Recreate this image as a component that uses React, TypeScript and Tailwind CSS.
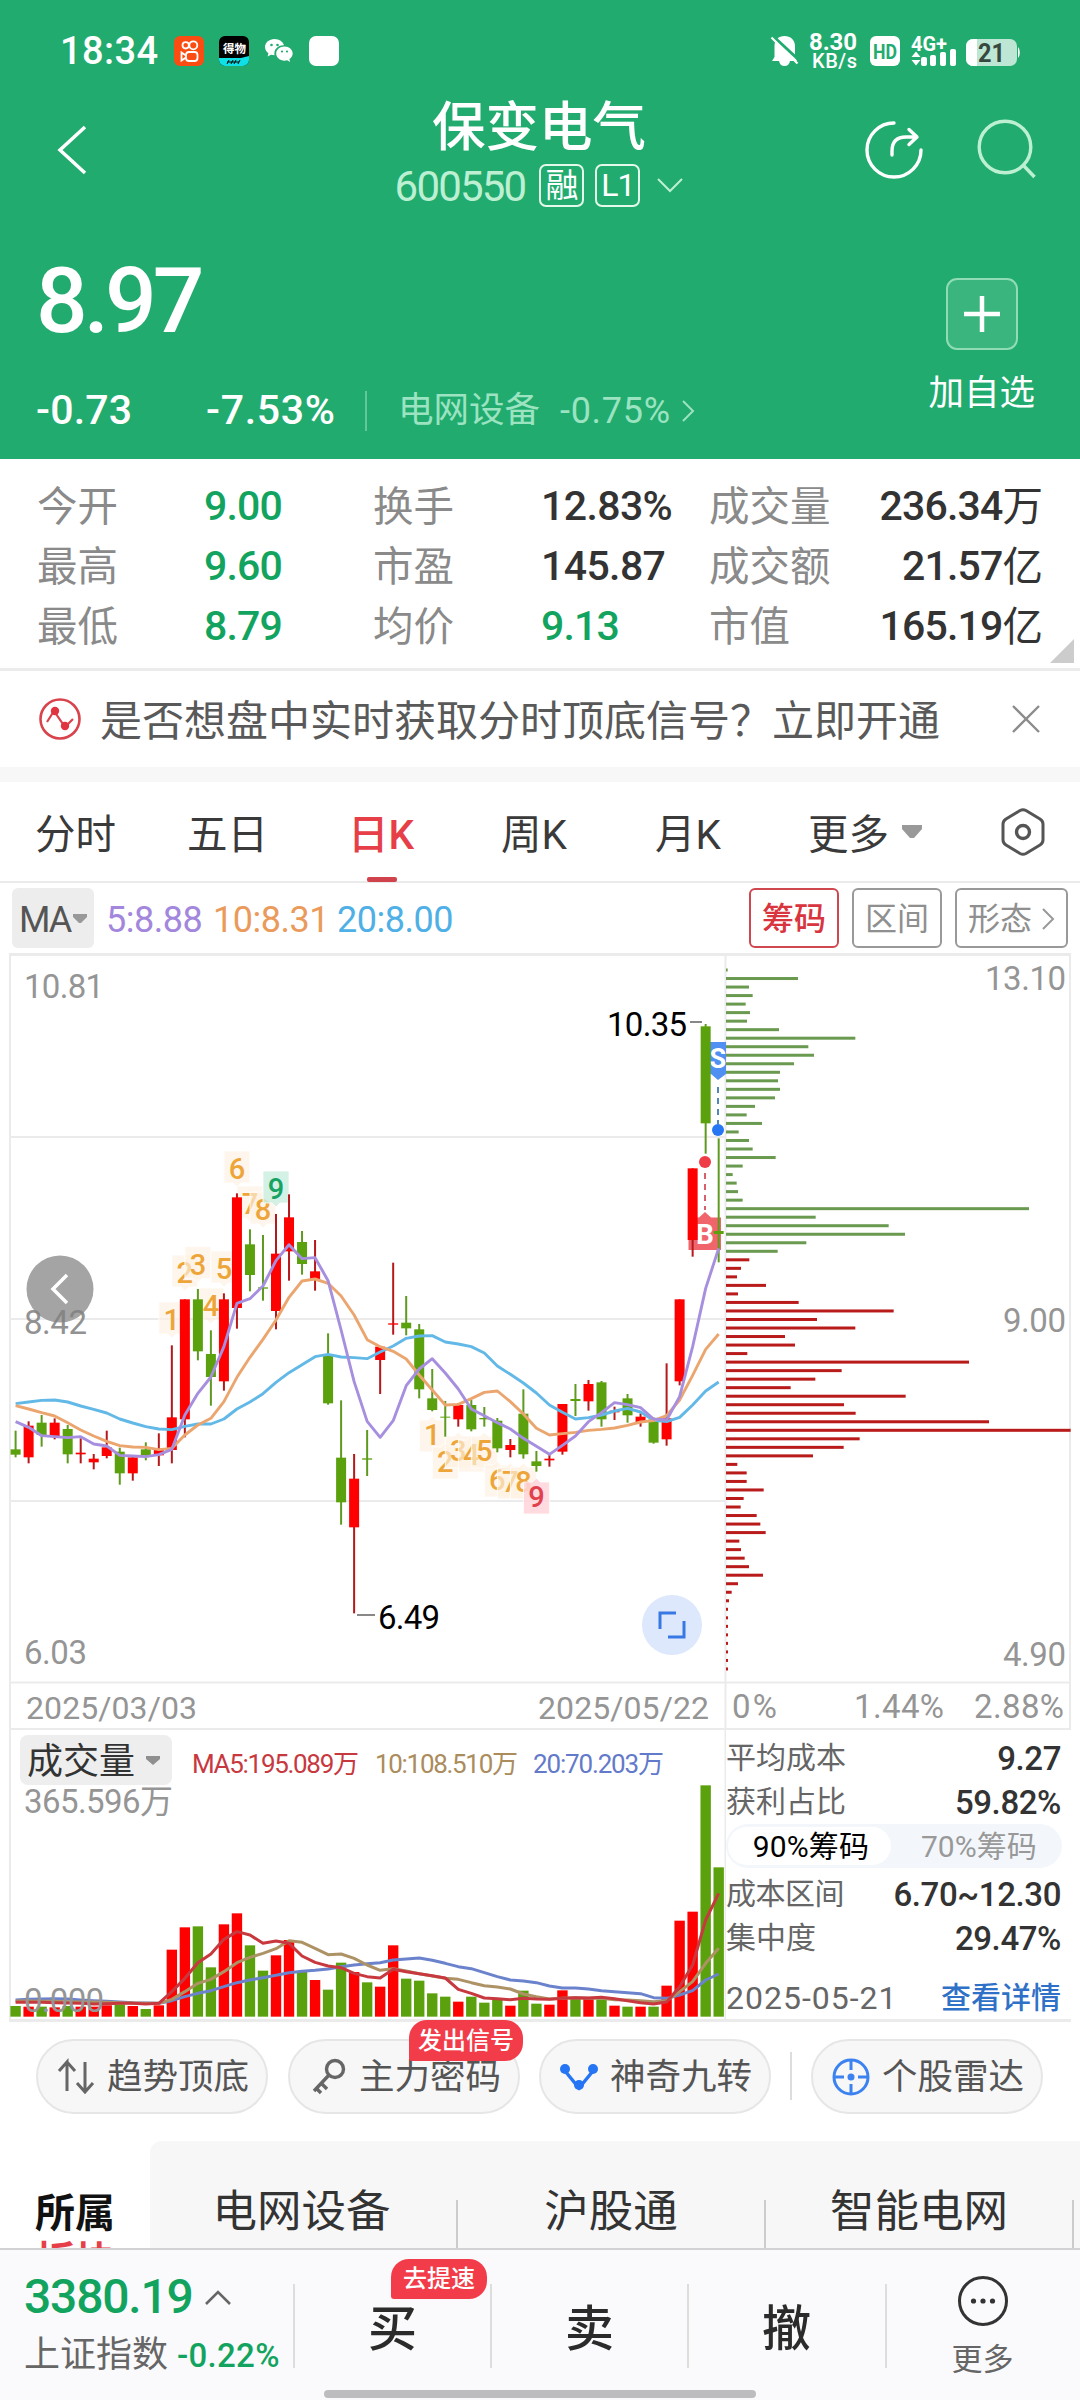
import type { ReactNode } from 'react';

type Candle = ['r' | 'g', number, number, number, number];

// kind, high, body top, body bottom, low (a third of a pixel each, from y = 1220)
const candles: Candle[] = [
    ['g', 632, 688, 704, 712], ['r', 604, 617, 712, 730], ['g', 585, 608, 645, 680], ['r', 595, 608, 650, 658],
    ['g', 615, 627, 703, 730], ['r', 655, 698, 703, 730], ['r', 702, 716, 727, 748], ['r', 632, 682, 708, 715],
    ['g', 683, 695, 760, 794], ['r', 710, 712, 760, 782], ['g', 667, 688, 706, 721], ['r', 640, 690, 706, 738],
    ['r', 376, 592, 690, 730], ['r', 238, 238, 598, 652], ['g', 207, 238, 394, 421], ['g', 331, 402, 471, 557],
    ['r', 220, 238, 484, 512], ['r', -80, -68, 264, 326], ['g', 28, 73, 165, 214], ['g', 45, 202, 206, 242],
    ['r', -18, 101, 273, 328], ['r', -77, -8, 94, 182], ['g', 33, 66, 132, 164], ['r', 60, 154, 178, 212],
    ['g', 340, 404, 550, 554], ['g', 541, 713, 847, 914], ['r', 702, 776, 922, 1180], ['g', 630, 715, 719, 768],
    ['r', 380, 380, 420, 522], ['r', 128, 310, 314, 344], ['g', 228, 308, 325, 346], ['g', 312, 328, 508, 535],
    ['g', 447, 535, 570, 574], ['g', 543, 590, 593, 650], ['r', 550, 555, 598, 620], ['g', 540, 555, 628, 634],
    ['g', 561, 594, 598, 620], ['g', 594, 602, 685, 697], ['r', 657, 675, 690, 712], ['g', 508, 581, 703, 716],
    ['g', 693, 724, 738, 755], ['r', 702, 716, 721, 740], ['r', 552, 552, 695, 704], ['g', 492, 537, 543, 588],
    ['r', 480, 492, 544, 572], ['g', 483, 487, 598, 620], ['r', 560, 572, 577, 600], ['g', 522, 535, 586, 608],
    ['r', 580, 590, 606, 620], ['g', 592, 598, 668, 671], ['r', 430, 595, 658, 677], ['r', 238, 238, 484, 496],
    ['r', -155, -155, 60, 110], ['g', -588, -581, -290, -199], ['g', -245, 33, 42, 127]
];

const ma5 = [605, 622, 647, 650, 653, 650, 672, 678, 706, 708, 710, 704, 688, 585, 520, 471, 380, 250, 236, 198, 122, 74, 116, 113, 182, 330, 485, 604, 652, 602, 497, 447, 416, 459, 507, 567, 587, 608, 627, 655, 679, 703, 676, 648, 605, 578, 548, 554, 563, 597, 600, 530, 380, 205, 85];
const ma10 = [557, 567, 578, 588, 608, 630, 648, 664, 677, 681, 682, 689, 685, 645, 615, 595, 545, 472, 412, 358, 300, 232, 183, 177, 190, 228, 285, 359, 380, 394, 417, 465, 510, 555, 553, 536, 517, 513, 545, 582, 625, 645, 641, 637, 631, 628, 624, 616, 606, 602, 587, 540, 466, 388, 342];
const ma20 = [551, 546, 541, 540, 546, 558, 568, 579, 597, 609, 620, 627, 629, 619, 612, 612, 597, 567, 546, 521, 487, 458, 434, 410, 403, 411, 413, 416, 396, 378, 355, 348, 347, 366, 372, 380, 399, 438, 463, 489, 519, 555, 577, 597, 593, 585, 573, 565, 576, 601, 605, 592, 555, 513, 486];

// chip distribution, from the highest price down
const chips = [5, 216, 69, 80, 59, 72, 63, 159, 388, 247, 264, 204, 162, 156, 162, 147, 87, 62, 108, 38, 69, 80, 149, 50, 20, 32, 36, 50, 909, 269, 488, 537, 241, 155, 70, 45, 33, 120, 36, 218, 503, 273, 388, 177, 207, 64, 729, 347, 268, 194, 539, 354, 389, 789, 1034, 401, 353, 261, 34, 62, 62, 113, 53, 44, 92, 103, 119, 40, 45, 56, 69, 111, 36, 17, 9, 6, 6, 6, 6, 6, 6, 6, 6];

const volumes = [1068, 1070, 1070, 1072, 1068, 1070, 1070, 1066, 1063, 1068, 1077, 1066, 899, 832, 829, 952, 823, 790, 886, 962, 916, 870, 965, 990, 1019, 938, 966, 997, 1010, 886, 986, 992, 1030, 1040, 1055, 1040, 1058, 1050, 1067, 1022, 1061, 1064, 1021, 1045, 1047, 1048, 1067, 1070, 1070, 1070, 1007, 812, 785, 406, 652];
const vol5 = [1057, 1057, 1057, 1058, 1059, 1060, 1062, 1061, 1060, 1060, 1062, 1060, 1025, 985, 938, 912, 868, 845, 855, 880, 873, 880, 918, 937, 948, 953, 970, 980, 984, 958, 965, 971, 977, 984, 1018, 1030, 1044, 1046, 1049, 1045, 1047, 1048, 1045, 1043, 1044, 1042, 1046, 1052, 1058, 1062, 1056, 1010, 945, 810, 730];
const vol10 = [1053, 1053, 1054, 1054, 1055, 1056, 1056, 1057, 1058, 1059, 1060, 1060, 1048, 1025, 1000, 988, 965, 938, 922, 910, 896, 872, 877, 895, 914, 912, 925, 945, 961, 956, 963, 971, 978, 985, 988, 998, 1007, 1011, 1017, 1032, 1040, 1047, 1045, 1043, 1045, 1045, 1049, 1050, 1052, 1055, 1052, 1025, 995, 940, 895];
const vol20 = [1050, 1048, 1047, 1046, 1047, 1050, 1052, 1054, 1056, 1058, 1059, 1060, 1052, 1040, 1030, 1022, 1010, 998, 990, 983, 976, 968, 964, 961, 957, 950, 945, 941, 938, 930, 927, 924, 931, 940, 950, 956, 968, 980, 990, 993, 998, 1008, 1014, 1014, 1017, 1022, 1025, 1028, 1031, 1043, 1045, 1035, 1022, 990, 972];

// candle index, text centre y
const topMarks: [number, number][] = [[12, 1320], [13, 1273], [14, 1264.5], [15, 1306], [16, 1269], [17, 1169], [18, 1204], [19, 1210], [20, 1189]];
const bottomMarks: [number, number][] = [[32, 1435], [33, 1462], [34, 1451], [35, 1455], [36, 1451], [37, 1480], [38, 1482], [39, 1482], [40, 1497]];

const RED = '#fe0000';
const GREEN = '#5ba10e';

const cx = (i: number) => 15.6 + 13.02 * i;
const linePoints = (values: number[], base: number) => values.map((v, i) => `${cx(i)},${base + v / 3}`).join(' ');

type LabelProps = { x: number; y: number; w: number; size?: number; fill?: string; children: string };

const Label = ({ x, y, w, size = 33, fill = '#959595', children }: LabelProps) => (
    <text x={x} y={y} textLength={w} fontSize={size} fill={fill}>
        {children}
    </text>
);

const Mark = ({ x, y, n, up }: { x: number; y: number; n: number; up?: boolean }) => {
    const nine = n === 9;
    const fill = nine ? (up ? '#ffd5da' : '#cdeee0') : '#fef1e2';
    const color = nine ? (up ? '#e0414c' : '#17a364') : '#eda53a';
    const top = up ? y - 15 : y - 18;
    const d = up
        ? `M${x - 13} ${top}h9l4 -4l4 4h9v32h-26z`
        : `M${x - 13} ${top}h26v32h-9l-4 4l-4 -4h-9z`;

    return (
        <g>
            <path d={d} fill={fill} fillOpacity={nine ? 0.85 : 0.65} stroke="#fff" strokeOpacity="0.8" />
            <text x={x} y={y + 10} fontSize="29" fontWeight="500" fill={color} textAnchor="middle">{n}</text>
        </g>
    );
};

const PriceChart = () => (
    <svg className="block" width="1080" height="777" viewBox="0 953 1080 777" fontFamily="Roboto, 'Noto Sans CJK SC', sans-serif">
        <g stroke="#ebebeb" strokeWidth="2" fill="none">
            <path d="M9 954.5H1071" strokeWidth="3" />
            <path d="M10 954V1730M1070 954V1730M725.5 954V1730" />
            <path d="M10 1137H725M10 1319H725M10 1501H725M10 1682.500H1070M10 1729H1070" />
        </g>

        <Label x={24} y={998} w={80}>10.81</Label>
        <Label x={24} y={1664} w={63}>6.03</Label>
        <Label x={985} y={990} w={81}>13.10</Label>
        <Label x={1003} y={1332} w={63}>9.00</Label>
        <Label x={1003} y={1666} w={63}>4.90</Label>
        <Label x={26} y={1719} w={171} size={32}>2025/03/03</Label>
        <Label x={538} y={1719} w={171} size={32}>2025/05/22</Label>
        <Label x={732} y={1718} w={45}>0%</Label>
        <Label x={854} y={1718} w={90}>1.44%</Label>
        <Label x={974} y={1718} w={90}>2.88%</Label>

        {chips.map((w, i) => (
            <rect key={i} x="726" y={968.500 + i * 8.524} width={w / 3} height="3" fill={i < 34 ? '#6a9a50' : '#b91a1a'} />
        ))}

        {topMarks.map(([i, y], n) => <Mark key={i} x={cx(i)} y={y} n={n + 1} />)}
        {bottomMarks.map(([i, y], n) => <Mark key={i} x={cx(i)} y={y} n={n + 1} up />)}

        <path d="M709 1042H726V1074L718 1080L711 1074H709Z" fill="#5090f2" />
        <text x="709.500" y="1068" fontSize="27" fontWeight="700" fill="#fff">S</text>
        <path d="M718 1087V1124" stroke="#5088b8" strokeWidth="2" strokeDasharray="6 5" />
        <path d="M688.500 1217.500H699L705 1212L711 1217.500H721V1250H688.500Z" fill="#f0646c" />
        <text x="696" y="1244" fontSize="28" fontWeight="700" fill="#fff">B</text>
        <path d="M705 1173V1210" stroke="#d8606a" strokeWidth="2" strokeDasharray="6 5" />

        {candles.map(([kind, high, top, bottom, low], i) => (
            <g key={i} fill={kind === 'r' ? RED : GREEN}>
                <rect x={cx(i) - 1} y={1220 + high / 3} width="2" height={(low - high) / 3} fill={kind === 'r' ? '#b5191b' : '#5f9a20'} />
                <rect x={cx(i) - 5} y={1220 + top / 3} width="10" height={(bottom - top) / 3} />
            </g>
        ))}

        <g fill="none" strokeWidth="2.900" strokeLinejoin="round">
            <polyline points={linePoints(ma20, 1220)} stroke="#62b8e6" />
            <polyline points={linePoints(ma10, 1220)} stroke="#eba56f" />
            <polyline points={linePoints(ma5, 1220)} stroke="#a78fdf" />
        </g>

        <circle cx="718" cy="1130" r="6" fill="#2577f4" />
        <circle cx="705" cy="1162" r="6" fill="#ee3d46" />

        <Label x={607} y={1036} w={80} fill="#000">10.35</Label>
        <path d="M690 1022H702" stroke="#888" strokeWidth="2" />
        <Label x={378} y={1629} w={62} fill="#000">6.49</Label>
        <path d="M357 1615H375" stroke="#888" strokeWidth="2" />

        <circle cx="60" cy="1289" r="33.500" fill="#a4a4a4" />
        <path d="M67 1275L53 1289L67 1303" fill="none" stroke="#fff" strokeWidth="3.500" />
        <g opacity="0.85"><Label x={24} y={1334} w={63} fill="#808080">8.42</Label></g>

        <circle cx="672" cy="1625" r="30" fill="#dde8fd" />
        <path d="M660 1629V1613H676M684 1621V1637H668" fill="none" stroke="#3878e4" strokeWidth="3" />
    </svg>
);

const VolumeChart = () => (
    <svg className="block" width="726" height="292" viewBox="0 1730 726 292" fontFamily="Roboto, 'Noto Sans CJK SC', sans-serif">
        <path d="M10 1730V2020M725.500 1730V2020" stroke="#ebebeb" strokeWidth="2" />
        <rect x="20" y="1735" width="152" height="50" rx="8" fill="#eee" />
        <text x="27" y="1774" fontSize="36" fill="#333" fontFamily="'Noto Sans CJK SC', sans-serif">成交量</text>
        <path d="M146 1756H160V1759L153 1765L146 1759Z" fill="#8f8f8f" />
        <Label x={192} y={1773} w={167} size={26} fill="#c8393f">MA5:195.089万</Label>
        <Label x={375} y={1773} w={143} size={26} fill="#ab8c5c">10:108.510万</Label>
        <Label x={533} y={1773} w={131} size={26} fill="#637aca">20:70.203万</Label>
        <Label x={24} y={1813} w={149}>365.596万</Label>
        {volumes.map((v, i) => (
            <rect key={i} x={cx(i) - 5.200} y={1650 + v / 3} width="10.400" height={(1100 - v) / 3} fill={candles[i][0] === 'r' ? RED : GREEN} />
        ))}
        <g fill="none" strokeWidth="3" strokeLinejoin="round">
            <polyline points={linePoints(vol20, 1650)} stroke="#6b83cc" />
            <polyline points={linePoints(vol10, 1650)} stroke="#ad9265" />
            <polyline points={linePoints(vol5, 1650)} stroke="#c8393f" />
        </g>
        <Label x={24} y={2012} w={80}>0.000</Label>
    </svg>
);

const StatusBar = () => (
    <div className="flex h-[102px] items-center pl-[60px] pr-[58px] font-medium text-white">
        <span className="w-[114px] text-[38px] tracking-[0.4px]">18:34</span>
        <div className="flex gap-[15px]">
            <svg width="30" height="30" viewBox="0 0 30 30">
                <rect width="30" height="30" rx="6" fill="#fb4d11" />
                <g fill="none" stroke="#fff" strokeWidth="1.800">
                    <circle cx="11.700" cy="9.300" r="3.200" />
                    <circle cx="19.300" cy="9.300" r="4" />
                    <rect x="12" y="16" width="11.500" height="9" rx="3" />
                    <path d="M12 19.500L7.500 16.500V24.500L12 21.500" />
                </g>
            </svg>
            <svg width="30" height="30" viewBox="0 0 30 30">
                <rect width="30" height="30" rx="6" fill="#000" />
                <path d="M0 22H22L30 20V24a6 6 0 0 1-6 6H6a6 6 0 0 1-6-6z" fill="#0ee0e6" />
                <text x="4" y="17" fontSize="11.500" fontWeight="700" fill="#fff" fontFamily="Noto Sans CJK SC">得物</text>
                <path d="M8 28l2-4M12 28l2-4M15 28l2-4M19 28l2-4M8 26h12" stroke="#000" strokeWidth="1" />
            </svg>
            <svg width="30" height="30" viewBox="0 0 30 30" fill="#fff">
                <path d="M10.500 3C5.200 3 1 6.600 1 11.100c0 2.400 1.300 4.700 3.400 6.100L3.600 20.400l3.400-1.700c1.100.3 2.200.5 3.500.5-1.200-6 4-10.500 9.500-10C19 5.800 15.200 3 10.500 3z" />
                <path d="M20.500 10.500c-4.700 0-8.300 3.200-8.300 7.100s3.600 7.100 8.300 7.100c.9 0 1.900-.1 2.700-.4l2.900 1.700-.7-2.900c2-1.300 3.300-3.300 3.300-5.500 0-3.900-3.500-7.100-8.200-7.100z" />
                <g fill="#22ab6f"><circle cx="7.500" cy="9" r="1.300" /><circle cx="13.500" cy="9" r="1.300" /><circle cx="18" cy="15.500" r="1.100" /><circle cx="23" cy="15.500" r="1.100" /></g>
            </svg>
            <span className="size-[30px] rounded-[7px] bg-white" />
        </div>
        <svg className="ml-auto" width="252" height="50" viewBox="770 26 252 50" fill="#fff" fontFamily="Roboto, sans-serif">
            <path d="M784.500 36c6 0 10.500 4 10.500 10v11l2 4H772l2.500-4V46c0-6 4-10 10-10zM779 61h11c-.5 3-2.500 5-5.500 5s-5-2-5.500-5z" />
            <path d="M774 37L800 61" stroke="#22ab6f" strokeWidth="3" />
            <path d="M771.500 37.500L797.500 63.500" stroke="#fff" strokeWidth="2.200" />
            <text x="809" y="50" fontSize="24" fontWeight="700" textLength="48">8.30</text>
            <text x="812" y="68" fontSize="20" fontWeight="500" textLength="45">KB/s</text>
            <rect x="870" y="36" width="30" height="30" rx="6" />
            <text x="873" y="58.500" fontSize="20" fontWeight="700" fill="#22ab6f" textLength="24" lengthAdjust="spacingAndGlyphs">HD</text>
            <text x="911" y="51" fontSize="21" fontWeight="700" textLength="36" lengthAdjust="spacingAndGlyphs">4G+</text>
            <path d="M911.500 57l4.500-5.500 4.500 5.500zM911.500 60l4.500 5.500 4.500-5.500z" />
            <rect x="921" y="57" width="6" height="9" rx="2" />
            <rect x="930" y="55" width="6" height="11" rx="2" />
            <rect x="940" y="52" width="6" height="14" rx="2" />
            <rect x="950" y="49" width="6" height="17" rx="2" />
            <rect x="966" y="39" width="51" height="27" rx="7" fillOpacity="0.7" />
            <path d="M977 39h-4a7 7 0 0 0-7 7v13a7 7 0 0 0 7 7h4zM1018 47a3 6 0 0 1 0 11z" />
            <text x="978" y="62" fontSize="26" fontWeight="700" fill="#37483f" textLength="27" lengthAdjust="spacingAndGlyphs">21</text>
        </svg>
    </div>
);

const Header = () => (
    <header className="h-[459px] bg-[#22ab6f] text-white">
        <StatusBar />
        <div className="flex h-[115px] items-start">
            <svg className="ml-[54px] mt-[22px]" width="36" height="52" viewBox="0 0 36 52">
                <path d="M31 3L6 26L31 49" fill="none" stroke="#fff" strokeWidth="3.500" />
            </svg>
            <div className="ml-[298px] flex w-[302px] flex-col items-center">
                <h1 className="-mt-px whitespace-nowrap text-[53.5px] font-medium leading-[54px]">保变电气</h1>
                <div className="mt-[5px] flex h-[50px] items-center">
                    <span className="mt-[3px] text-[42px] leading-[46px] tracking-[-1.8px] text-[#bdf0d3]">600550</span>
                    <span className="ml-[14px] flex h-[43px] w-[45px] items-center justify-center rounded-[7px] border-2 border-[#e3f9ec] text-[33px] leading-none">融</span>
                    <span className="ml-[11px] flex h-[43px] w-[45px] items-center justify-center rounded-[7px] border-2 border-[#e3f9ec] text-[32px] leading-none tracking-[-1px]">L1</span>
                    <svg className="ml-[17px]" width="26" height="16" viewBox="0 0 26 16">
                        <path d="M1 2L13 14L25 2" fill="none" stroke="#bdf0d3" strokeWidth="2" />
                    </svg>
                </div>
            </div>
            <svg className="ml-auto mr-[41px] mt-[17px]" width="176" height="62" viewBox="863 119 176 62" fill="none" strokeWidth="3.400">
                <path d="M894 123A27 27 0 1 0 921 150" stroke="#fff" strokeLinecap="round" />
                <path d="M892 155V151Q892 137 906 137H915M909 129.500L917 137L909 144.500" stroke="#fff" strokeLinecap="round" strokeLinejoin="round" />
                <circle cx="1005" cy="147" r="25.800" stroke="#bdf0d3" />
                <path d="M1024 166L1034.500 177" stroke="#bdf0d3" />
            </svg>
        </div>
        <div className="flex justify-between">
            <div className="pl-[36px] font-medium">
                <div className="mt-[30px] text-[91px] leading-[108px] tracking-[-4px]">8.97</div>
                <div className="mt-[29px] flex h-[54px] items-center text-[41px]">
                    <span className="w-[170px] tracking-[0.2px]">-0.73</span>
                    <span className="w-[159px] tracking-[0.7px]">-7.53%</span>
                    <span className="h-[40px] w-[2px] bg-[#64c79c]" />
                    <span className="ml-[31px] text-[35.5px] font-normal text-[#9be3c1]">电网设备</span>
                    <span className="ml-[20px] text-[36px] font-normal tracking-[0.7px] text-[#9be3c1]">-0.75%</span>
                    <svg className="ml-[10px]" width="14" height="24" viewBox="0 0 14 24">
                        <path d="M2 2L12 12L2 22" fill="none" stroke="#9be3c1" strokeWidth="2" />
                    </svg>
                </div>
            </div>
            <div className="mr-[45px] flex flex-col items-center pt-[61px]">
                <svg width="72" height="72" viewBox="0 0 72 72">
                    <rect x="1" y="1" width="70" height="70" rx="10" fill="#3bb57e" stroke="#8fdcb7" strokeWidth="2" />
                    <path d="M36 18V54M18 36H54" stroke="#fff" strokeWidth="4.500" />
                </svg>
                <span className="mt-[18px] text-[35.5px] leading-[50px]">加自选</span>
            </div>
        </div>
    </header>
);

const stats = [
    ['今开', '9.00', '换手', '12.83%', '成交量', '236.34', '万'],
    ['最高', '9.60', '市盈', '145.87', '成交额', '21.57', '亿'],
    ['最低', '8.79', '均价', '9.13', '市值', '165.19', '亿']
];

const Stats = () => (
    <section className="relative h-[212px] border-b-[3px] border-[#ebebeb] pl-[37px] pr-[37px] pt-[18px]">
        {stats.map(row => (
            <div key={row[0]} className="flex h-[60px] items-center text-[40.5px] text-[#333]">
                <span className="w-[167px] text-[#8a8a8a]">{row[0]}</span>
                <span className="w-[169px] text-[41px] font-medium tracking-[-0.8px] text-[#12a45f]">{row[1]}</span>
                <span className="w-[168px] text-[#8a8a8a]">{row[2]}</span>
                <span className={row[2] === '均价' ? 'w-[168px] text-[41px] font-medium tracking-[-0.8px] text-[#12a45f]' : 'w-[168px] text-[41px] font-medium tracking-[-0.6px]'}>{row[3]}</span>
                <span className="whitespace-nowrap text-[#8a8a8a]">{row[4]}</span>
                <span className="ml-auto flex items-center"><span className="text-[41px] font-medium tracking-[-0.8px]">{row[5]}</span>{row[6]}</span>
            </div>
        ))}
        <svg className="absolute bottom-[5px] right-[6px]" width="24" height="24"><path d="M24 0V24H0Z" fill="#ccc" /></svg>
    </section>
);

const Notice = () => (
    <section className="flex h-[96px] items-center pl-[39px] pr-[40px]">
        <svg width="42" height="42" viewBox="0 0 42 42">
            <circle cx="21" cy="21" r="19.500" fill="none" stroke="#d9434c" strokeWidth="2.600" />
            <path d="M8 24L15 13L26 29L34 21" fill="none" stroke="#d9434c" strokeWidth="2.200" />
            <circle cx="16" cy="13" r="4.200" fill="#e03540" /><circle cx="26" cy="28" r="4.200" fill="#e03540" />
        </svg>
        <span className="ml-[19px] mt-[6px] whitespace-nowrap text-[42px] leading-none text-[#595959]">是否想盘中实时获取分时顶底信号？立即开通</span>
        <svg className="ml-auto" width="28" height="28" viewBox="0 0 28 28">
            <path d="M1 1L27 27M27 1L1 27" stroke="#8c8c8c" strokeWidth="2.400" />
        </svg>
    </section>
);

const Tabs = () => (
    <nav className="flex h-[101px] items-center border-b-2 border-[#ebebeb] text-[40.5px] text-[#3a3a3a]">
        <span className="ml-[35px] mt-[8px] w-[152px]">分时</span>
        <span className="mt-[8px] w-[161px]">五日</span>
        <span className="relative mt-[8px] w-[153px] font-medium text-[#e63f48]">
            日K
            <span className="absolute -bottom-[16px] left-[19px] h-[5px] w-[30px] rounded-[2px] bg-[#d0434c]" />
        </span>
        <span className="mt-[8px] w-[154px]">周K</span>
        <span className="mt-[8px] w-[153px]">月K</span>
        <span className="mt-[8px]">更多</span>
        <svg className="ml-[12px]" width="22" height="14" viewBox="0 0 22 14"><path d="M1 0H21V4L13 13H9L1 4Z" fill="#999" /></svg>
        <svg className="ml-auto mr-[34px]" width="46" height="50" viewBox="0 0 46 50" fill="none" stroke="#555" strokeWidth="3">
            <path d="M20 3.500Q23 2 26 3.500L40 12Q43 14 43 17V33Q43 36 40 38L26 46.500Q23 48 20 46.500L6 38Q3 36 3 33V17Q3 14 6 12Z" />
            <circle cx="23" cy="25" r="6.500" strokeWidth="3.400" />
        </svg>
    </nav>
);

const MaRow = () => (
    <div className="flex h-[70px] items-start pl-[12px] pr-[12px] pt-[5px]">
        <div className="flex h-[60px] w-[82px] items-center rounded-[6px] bg-[#ededed] pl-[7px]">
            <span className="mt-[3px] text-[36px] tracking-[-2px] text-[#555]">MA</span>
            <svg className="ml-auto mr-[7px]" width="14" height="9"><path d="M0 0H14V3L8 9H6L0 3Z" fill="#999" /></svg>
        </div>
        <div className="ml-[12px] flex h-[63px] items-center text-[36px] tracking-[-0.5px]">
            <span className="w-[107px] text-[#a287dd]">5:8.88</span>
            <span className="w-[124px] text-[#ea9b5c]">10:8.31</span>
            <span className="text-[#4fb0e6]">20:8.00</span>
        </div>
        <div className="ml-auto flex gap-[13px] text-[32px] text-[#8f8f8f]">
            <span className="flex h-[60px] w-[90px] items-center justify-center rounded-[6px] border-2 border-[#cf4850] pt-[2px] font-medium text-[#d8353f]">筹码</span>
            <span className="flex h-[60px] w-[90px] items-center justify-center rounded-[6px] border-2 border-[#999] pt-[2px]">区间</span>
            <span className="flex h-[60px] w-[113px] items-center justify-center rounded-[6px] border-2 border-[#999] pt-[2px]">
                形态
                <svg className="ml-[9px]" width="14" height="24" viewBox="0 0 14 24"><path d="M2 2L12 12L2 22" fill="none" stroke="#999" strokeWidth="2" /></svg>
            </span>
        </div>
    </div>
);

const ChipRow = ({ label, value, className }: { label: string; value: string; className: string }) => (
    <div className={className}>
        <span className="text-[30px] text-[#666]">{label}</span>
        <span className="text-[33px] font-medium tracking-[-0.4px] text-[#333]">{value}</span>
    </div>
);

const ChipPanel = () => (
    <div className="flex w-[335px] flex-col pt-[6px] leading-none">
        <ChipRow className="flex h-[44px] items-center justify-between" label="平均成本" value="9.27" />
        <ChipRow className="flex h-[44px] items-center justify-between" label="获利占比" value="59.82%" />
        <div className="flex h-[44px] w-[336px] items-center rounded-full bg-[#f3f7fb] p-[2px] text-[30px] text-[#999]">
            <span className="flex h-[38px] w-[163px] items-center justify-end rounded-full bg-white pr-[22px] pt-[2px] tracking-[0.1px] text-black">90%筹码</span>
            <span className="ml-[30px] pt-[2px]">70%筹码</span>
        </div>
        <ChipRow className="mt-[4px] flex h-[44px] items-center justify-between tracking-[-0.5px]" label="成本区间" value="6.70~12.30" />
        <ChipRow className="flex h-[44px] items-center justify-between" label="集中度" value="29.47%" />
        <div className="mt-[16px] flex h-[44px] items-center justify-between">
            <span className="text-[32px] tracking-[1px] text-[#666]">2025-05-21</span>
            <span className="text-[30px] font-medium text-[#2f71c6]">查看详情</span>
        </div>
    </div>
);

const Pill = ({ icon, label, children }: { icon: ReactNode; label: string; children?: ReactNode }) => (
    <div className="relative flex h-[75px] w-[232px] items-center rounded-full border-2 border-[#e6e6e6] bg-[#f7f7f7] pl-[18px]">
        <svg className="shrink-0" width="40" height="40" viewBox="0 0 40 40" fill="none">{icon}</svg>
        <span className="ml-[11px] mt-[2px] whitespace-nowrap text-[35.5px] text-[#555]">{label}</span>
        {children}
    </div>
);

const Tools = () => (
    <section className="flex h-[119px] items-start pl-[36px] pt-[17px]">
        <Pill label="趋势顶底" icon={<path d="M3 14L11 5V34M3 14L11 5L19 14M21 26L29 35L37 26M29 35V5" stroke="#666" strokeWidth="3" />} />
        <span className="w-[20px]" />
        <Pill
            label="主力密码"
            icon={
                <g stroke="#666" strokeWidth="3.400">
                    <circle cx="27" cy="12" r="8.500" />
                    <path d="M21 18L6 34M13 26L19 32M8 31L13 36" />
                </g>
            }
        >
            <span className="absolute -top-[21px] left-[119px] flex h-[41px] w-[114px] items-center justify-center rounded-[18px] rounded-bl-[3px] bg-[#f33c49] text-[24px] font-medium text-white">发出信号</span>
        </Pill>
        <span className="w-[19px]" />
        <Pill
            label="神奇九转"
            icon={
                <g fill="#2575f5">
                    <path d="M6 14L20 31L34 14" fill="none" stroke="#2575f5" strokeWidth="3.400" />
                    <circle cx="6" cy="12" r="5" /><circle cx="34" cy="12" r="5" /><circle cx="20" cy="28" r="5" />
                </g>
            }
        />
        <span className="mx-[19px] mt-[13px] h-[48px] w-[2px] bg-[#ddd]" />
        <Pill
            label="个股雷达"
            icon={
                <g stroke="#3c82f0" strokeWidth="3">
                    <circle cx="20" cy="20" r="17" />
                    <path d="M20 3V13M20 27V37M3 20H13M27 20H37" />
                    <circle cx="20" cy="20" r="3.500" fill="#3c82f0" stroke="none" />
                </g>
            }
        />
    </section>
);

const Sectors = () => (
    <section className="flex h-[107px] overflow-hidden">
        <div className="w-[150px] pl-[35px] pt-[49px] text-[40px] font-bold leading-[48px] text-[#111]">
            <div>所属</div>
            <div className="text-[#e63f48]">板块</div>
        </div>
        <div className="flex flex-1 rounded-tl-[12px] bg-[#f7f7f7] text-[44.5px] leading-[60px] text-[#333]">
            <div className="flex w-[306px] justify-center pt-[41px]"><span className="-ml-[3px]">电网设备</span></div>
            <div className="mt-[59px] w-[2px] bg-[#ccc]" />
            <div className="flex w-[306px] justify-center pt-[41px]">沪股通</div>
            <div className="mt-[59px] w-[2px] bg-[#ccc]" />
            <div className="flex w-[306px] justify-center pt-[41px]">智能电网</div>
            <div className="mt-[59px] w-[2px] bg-[#ccc]" />
        </div>
    </section>
);

const BottomBar = () => (
    <footer className="h-[152px] border-t-2 border-[#d2d2d4] bg-[#fafafc]">
        <div className="flex h-[140px] items-start">
            <div className="w-[269px] shrink-0 whitespace-nowrap pl-[24px] pt-[20px]">
                <div className="flex h-[54px] items-center text-[48px] font-medium leading-none tracking-[-1.2px] text-[#12a45f]">
                    3380.19
                    <svg className="ml-[12px]" width="26" height="15" viewBox="0 0 26 15"><path d="M1 14L13 2L25 14" fill="none" stroke="#666" strokeWidth="2.600" /></svg>
                </div>
                <div className="mt-[7px] flex h-[48px] items-center text-[36px] leading-none text-[#666]">
                    上证指数
                    <span className="ml-[9px] text-[33px] font-medium tracking-[0.3px] text-[#12a45f]">-0.22%</span>
                </div>
            </div>
            {['买', '卖', '撤'].map(name => (
                <div key={name} className="relative ml-[24px] mt-[34px] flex h-[84px] w-[173px] items-center justify-center border-l-2 border-[#ddd] text-[49px] font-medium text-[#2b2b2b]">
                    <span className="ml-[24px] mt-[7px]">{name}</span>
                    {name === '买' && (
                        <span className="absolute -top-[25px] left-[96px] flex h-[40px] w-[96px] items-center justify-center rounded-[18px] rounded-bl-[3px] bg-[#f33c49] text-[24px] text-white">去提速</span>
                    )}
                </div>
            ))}
            <div className="ml-[25px] mt-[34px] h-[84px] w-[2px] bg-[#ddd]" />
            <div className="flex flex-1 flex-col items-center pr-[2px] pt-[24px]">
                <svg width="54" height="54" viewBox="0 0 54 54">
                    <circle cx="27" cy="27" r="23.500" fill="none" stroke="#333" strokeWidth="3" />
                    <g fill="#333"><circle cx="17.500" cy="27" r="2.600" /><circle cx="27" cy="27" r="2.600" /><circle cx="36.500" cy="27" r="2.600" /></g>
                </svg>
                <span className="mt-[9px] text-[31px] leading-[46px] text-[#666]">更多</span>
            </div>
        </div>
        <div className="mx-auto h-[8px] w-[432px] rounded-full bg-[#bdbdbf]" />
    </footer>
);

const App = () => (
    <main className="h-[2400px] w-[1080px] overflow-hidden bg-white font-[Roboto,'Noto_Sans_CJK_SC',sans-serif]">
        <Header />
        <Stats />
        <Notice />
        <div className="h-[15px] bg-[#f7f7f7]" />
        <Tabs />
        <MaRow />
        <PriceChart />
        <div className="flex h-[292px]">
            <VolumeChart />
            <ChipPanel />
        </div>
        <div className="relative -mt-[3px] ml-[9px] mr-[9px] h-[3px] bg-[#ebebeb]" />
        <Tools />
        <Sectors />
        <BottomBar />
    </main>
);

export default App;
